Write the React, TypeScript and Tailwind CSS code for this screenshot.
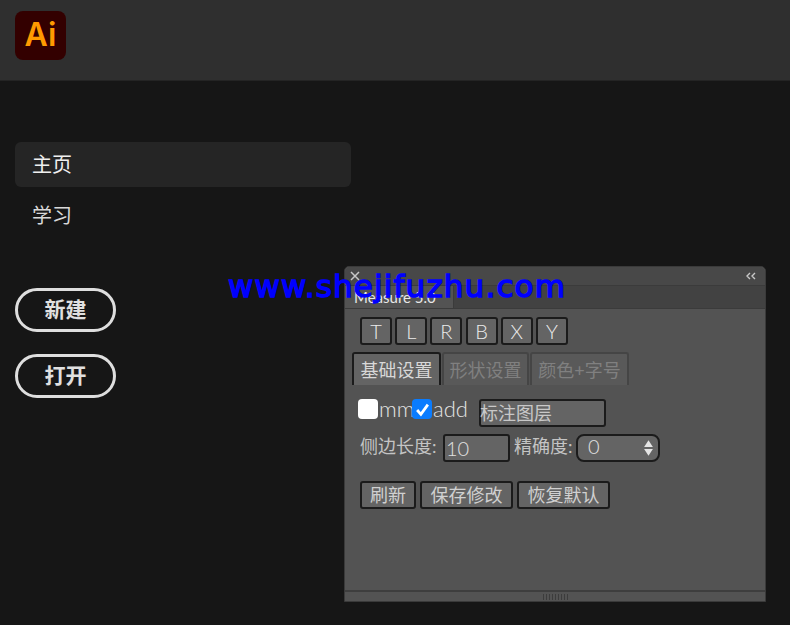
import React from "react";

const cjk = "font-['Inter','Noto_Sans_CJK_SC',sans-serif]";
const panelFont = "font-['Lato','Noto_Sans_CJK_SC',sans-serif]";

function LetterButton({ label }: { label: string }) {
    return (
        <button className="flex h-[28px] w-[32px] items-center justify-center rounded-[3px] border-2 border-[#1b1b1b] bg-[#646464] text-[20px] font-light leading-none text-[#ececec]">
            {label}
        </button>
    );
}

function ActionButton({ label, width }: { label: string; width: string }) {
    return (
        <button className={`flex h-[28px] items-center justify-center rounded-[3px] border-2 border-[#1b1b1b] bg-[#646464] text-[18px] leading-none text-[#d0d0d0] ${width}`}>
            {label}
        </button>
    );
}

function MeasurePanel() {
    return (
        <div className={`absolute left-[344px] top-[266px] flex h-[336px] w-[422px] flex-col rounded-t-[5px] border border-[#3a3a3a] bg-[#535353] ${panelFont}`}>
            {/* Title bar */}
            <div className="flex h-[18px] items-center justify-between rounded-t-[5px] bg-[#484848] pl-[5px] pr-[9px] text-[#c8c8c8]">
                <svg width="10" height="10" viewBox="0 0 10 10" fill="none" stroke="currentColor" strokeWidth="1.5">
                    <path d="M1 1l8 8M9 1l-8 8" />
                </svg>
                <svg width="10" height="8" viewBox="0 0 10 8" fill="none" stroke="currentColor" strokeWidth="1.4">
                    <path d="M4 1L1 4l3 3M9 1L6 4l3 3" />
                </svg>
            </div>

            {/* Panel tab */}
            <div className="flex h-[24px] border-y border-[#3b3b3b] bg-[#424242]">
                <div className="flex w-[109px] items-center border-r border-[#3b3b3b] bg-[#535353] pl-[9px] text-[15px] leading-none text-[#e8e8e8]">
                    Measure 5.0
                </div>
            </div>

            {/* Axis buttons */}
            <div className="mt-[8px] flex gap-[3.2px] pl-[15px]">
                {["T", "L", "R", "B", "X", "Y"].map((l) => (
                    <LetterButton key={l} label={l} />
                ))}
            </div>

            {/* Tabs */}
            <div className="mt-[7px] flex gap-[1px] pl-[7px]">
                <div className="flex h-[33px] w-[89px] items-center justify-center rounded-t-[3px] border-x-2 border-t-2 border-[#1b1b1b] bg-[#646464] text-[18px] leading-none text-[#d8d8d8]">
                    基础设置
                </div>
                <div className="flex h-[33px] w-[87px] items-center justify-center rounded-t-[3px] border-x-2 border-t-2 border-[#454545] bg-[#595959] text-[18px] leading-none text-[#808080]">
                    形状设置
                </div>
                <div className="flex h-[33px] w-[99px] items-center justify-center rounded-t-[3px] border-x-2 border-t-2 border-[#454545] bg-[#595959] text-[18px] leading-none text-[#808080]">
                    颜色+字号
                </div>
            </div>

            {/* Form rows */}
            <div className="mt-[14px] flex items-start pl-[13px] text-[18px] leading-none text-[#c4c4c4]">
                <span className="h-[20px] w-[20px] rounded-[4px] bg-white" />
                <span className="ml-px w-[33px] text-[22px] font-light leading-[20px] text-[#e4e4e4]">mm</span>
                <span className="flex h-[20px] w-[20px] items-center justify-center rounded-[4px] bg-[#0a7cff]">
                    <svg width="15" height="15" viewBox="0 0 14 14" fill="none" stroke="white" strokeWidth="2.6">
                        <path d="M2 7.5l3.5 4L12 2.5" />
                    </svg>
                </span>
                <span className="ml-px w-[46px] text-[22px] font-light leading-[20px] text-[#e4e4e4]">add</span>
                <div className="flex h-[28px] w-[127px] items-center rounded-[3px] border-2 border-[#1b1b1b] bg-[#646464] text-[#c8c8c8]">
                    <span className="-ml-px">标注图层</span>
                </div>
            </div>

            <div className="mt-[7px] flex items-center pl-[15px] text-[18px] leading-none text-[#c4c4c4]">
                <span className="w-[83px] -translate-y-[2px]">侧边长度:</span>
                <div className="flex h-[28px] w-[67px] items-center rounded-[3px] border-2 border-[#1b1b1b] bg-[#646464] pl-[1px] text-[20px] font-light text-[#e0e0e0]">
                    10
                </div>
                <span className="ml-[4px] w-[62px] -translate-y-[2px]">精确度:</span>
                <div className="flex h-[28px] w-[84px] items-center justify-between rounded-[8px] border-2 border-[#1b1b1b] bg-[#646464] pl-[10px] pr-[4px] text-[20px] font-light text-[#e0e0e0]">
                    <span className="-translate-y-[2px]">0</span>
                    <svg width="11" height="18" viewBox="0 0 10 16" fill="#e4e4e4">
                        <path d="M5 1l4 6H1zM5 15l4-6H1z" />
                    </svg>
                </div>
            </div>

            <div className="mt-[19px] flex gap-[4px] pl-[15px]">
                <ActionButton label="刷新" width="w-[56px]" />
                <ActionButton label="保存修改" width="w-[93px]" />
                <ActionButton label="恢复默认" width="w-[93px]" />
            </div>

            {/* Resize strip */}
            <div className="mt-auto flex h-[11px] items-center justify-center border-t-2 border-[#3e3e3e] bg-[#535353]">
                <div className="flex gap-[2px]">
                    {Array.from({ length: 9 }).map((_, i) => (
                        <span key={i} className="h-[6px] w-px bg-[#3c3c3c]" />
                    ))}
                </div>
            </div>
        </div>
    );
}

export default function App() {
    return (
        <div className={`relative h-[625px] w-[790px] overflow-hidden bg-[#161616] ${cjk}`}>
            {/* Header */}
            <header className="flex h-[81px] border-b border-[#242424] bg-[#2f2f2f] pl-[15px] pt-[11px]">
                <div className="flex h-[49px] w-[51px] items-center justify-center rounded-[8px] bg-[#330000] pb-[2px] font-['Inter',sans-serif] text-[32px] font-semibold leading-none text-[#ff9a00]">
                    Ai
                </div>
            </header>

            {/* Sidebar */}
            <nav className="ml-[15px] mt-[61px] flex w-[336px] flex-col text-[20px] leading-none">
                <div className="flex h-[45px] items-center rounded-[6px] bg-[#252525] pl-[17px] text-[#f0f0f0]">主页</div>
                <div className="mt-[6px] flex h-[45px] items-center pl-[17px] text-[#d8d8d8]">学习</div>
            </nav>

            <div className="ml-[15px] mt-[50px] flex flex-col gap-[22px]">
                <button className="flex h-[44px] w-[101px] items-center justify-center rounded-full border-[3px] border-[#dedede] pb-[2px] text-[21px] font-bold leading-none text-[#e0e0e0]">
                    新建
                </button>
                <button className="flex h-[44px] w-[101px] items-center justify-center rounded-full border-[3px] border-[#dedede] pb-[2px] text-[21px] font-bold leading-none text-[#e0e0e0]">
                    打开
                </button>
            </div>

            <MeasurePanel />

            {/* Watermark */}
            <div className="absolute left-[228px] top-[266px] font-['DejaVu_Sans',sans-serif] text-[31px] leading-[40px] tracking-[1.15px] text-[#0000ff] [-webkit-text-stroke:1.4px_#0000ff]">
                www.shejifuzhu.com
            </div>
        </div>
    );
}
